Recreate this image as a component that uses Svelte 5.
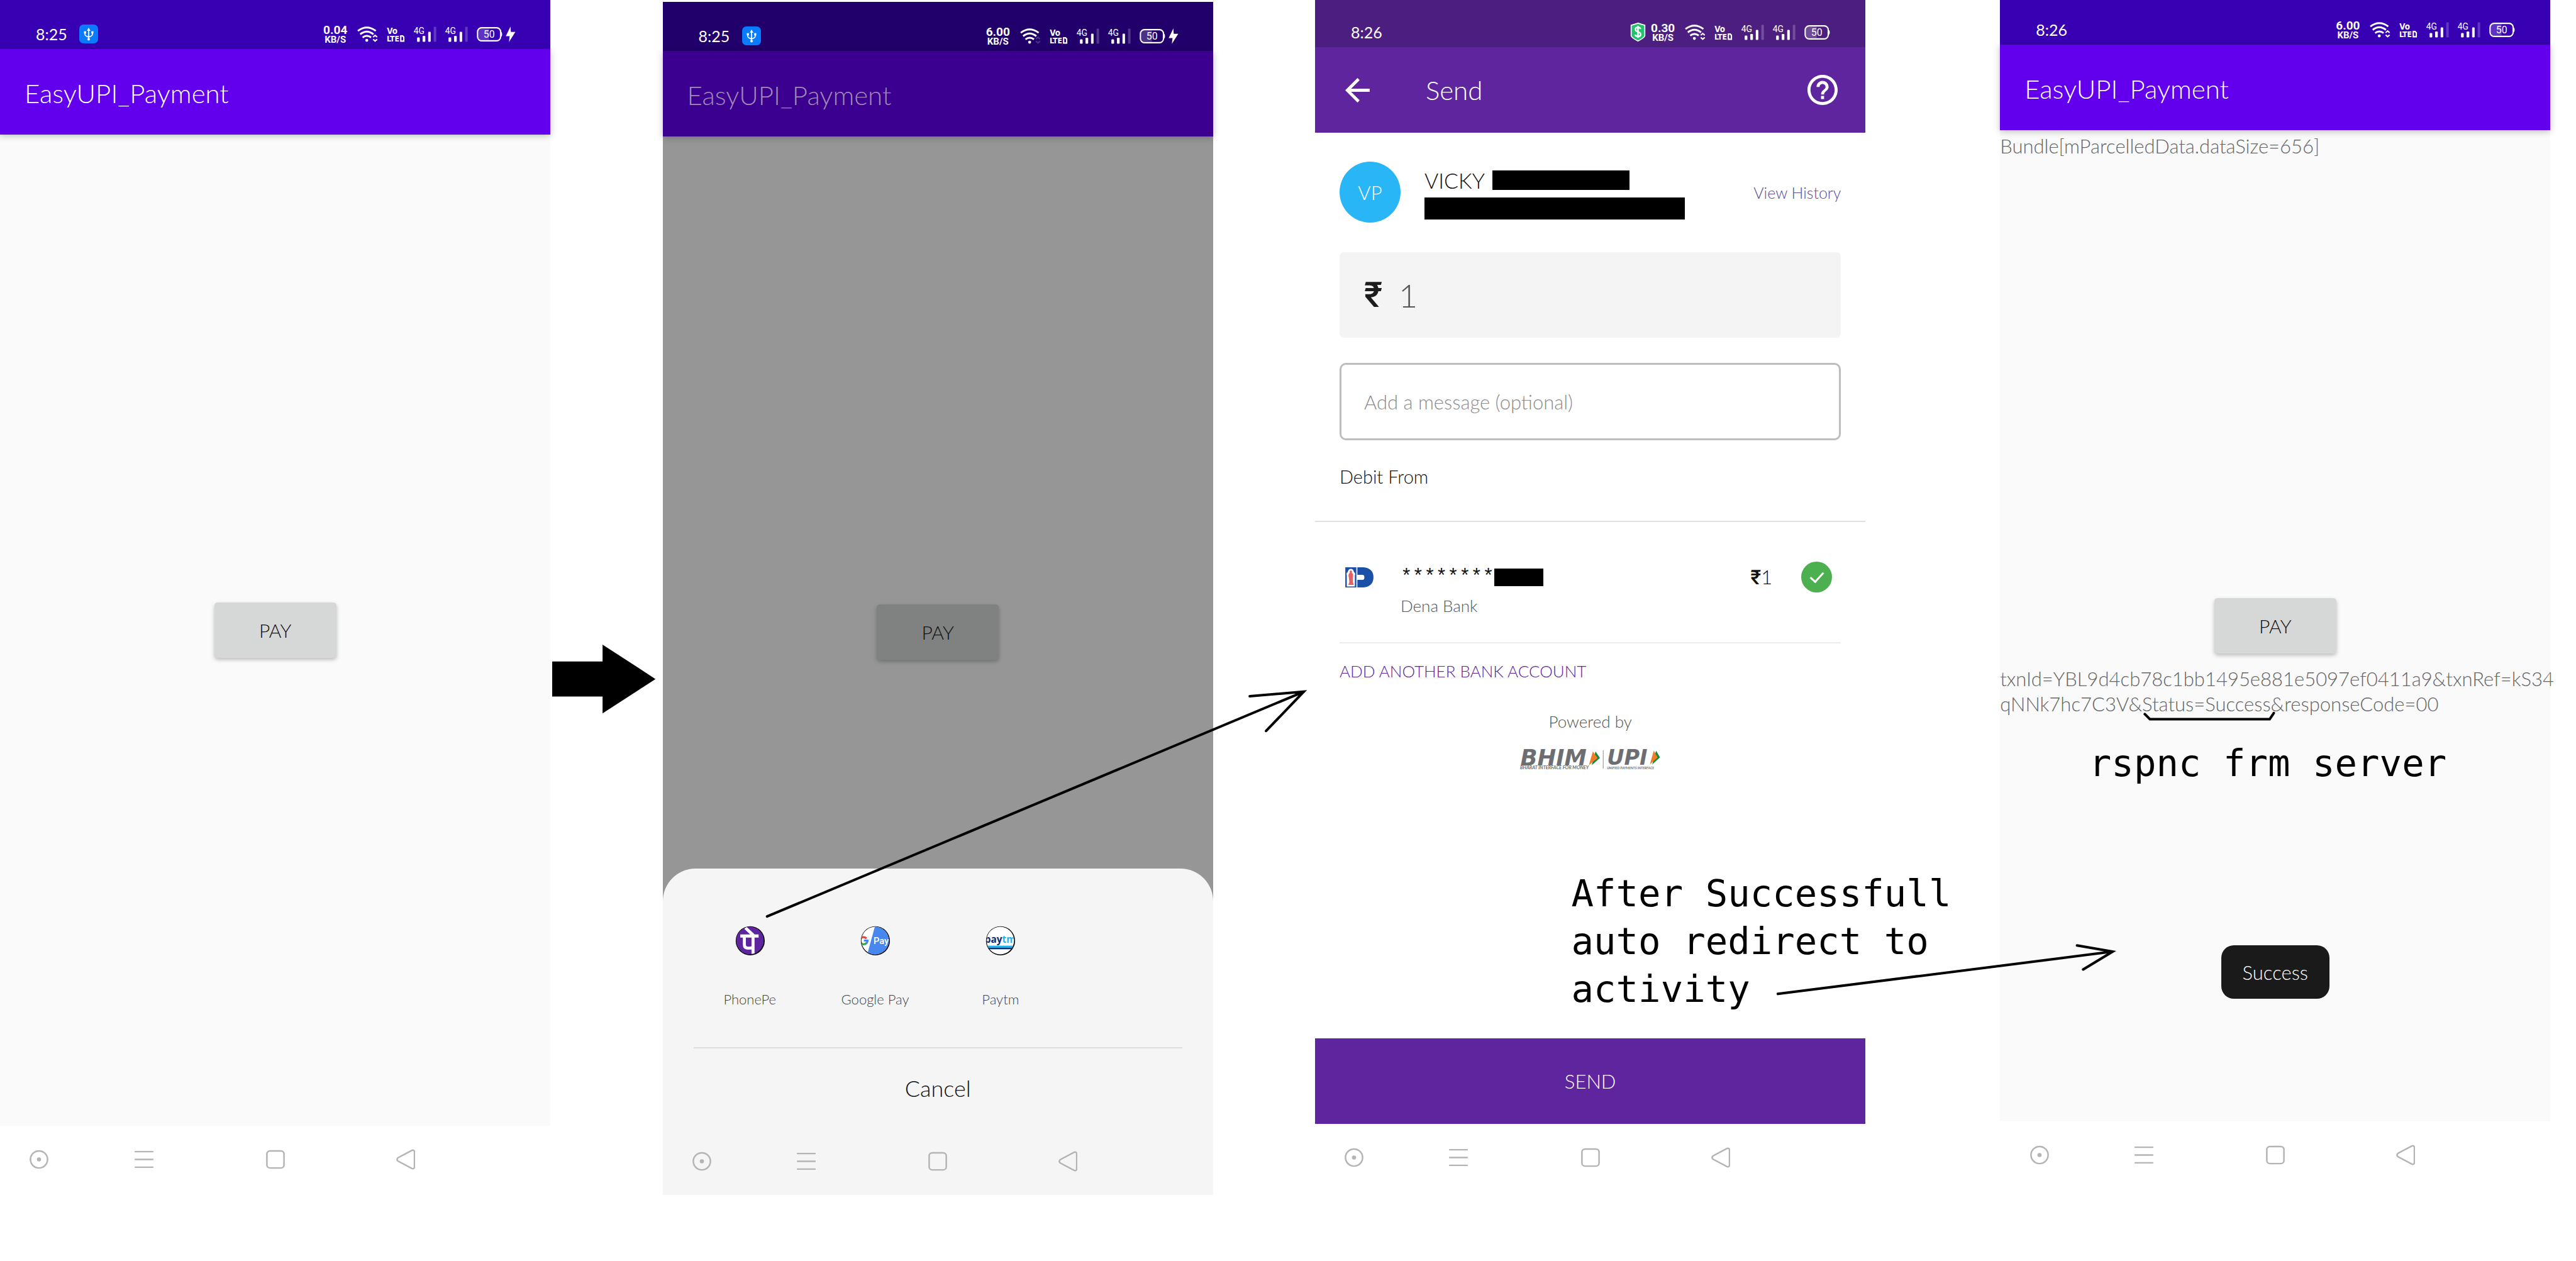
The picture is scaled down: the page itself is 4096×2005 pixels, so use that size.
<script>
  const apps = [
    { id: 'phonepe', name: 'PhonePe' },
    { id: 'gpay', name: 'Google Pay' },
    { id: 'paytm', name: 'Paytm' }
  ];
  let amount = $state('1');
  let message = $state('');
</script>

{#snippet signal()}
  <svg class="i-signal" viewBox="568 58 142 100" aria-hidden="true">
    <text x="571" y="107" font-size="52">4G</text>
    <rect x="591" y="127" width="16" height="26" rx="5" />
    <rect x="624" y="117" width="16" height="36" rx="5" />
    <rect x="657" y="93" width="15" height="60" rx="5" />
    <rect x="690" y="63" width="15" height="90" rx="5" opacity="0.22" />
  </svg>
{/snippet}

{#snippet status(time, rate, usb, shield, busy)}
  <div class="status">
    <span class="clock">{time}</span>
    {#if usb}
      <svg class="i-usb" viewBox="0 0 36 36" aria-hidden="true">
        <rect width="36" height="36" rx="8" fill="#0a7bff" />
        <g fill="none" stroke="#fff" stroke-width="2">
          <path d="M18 10v17M11 16v3q0 3 7 5M25 16v3q0 3-7 5" />
        </g>
        <path d="M18 6l3.500 6h-7zM9 13h4v4H9zM23 13h4v4h-4z" fill="#fff" />
        <circle cx="18" cy="28" r="2.500" fill="#fff" />
      </svg>
    {/if}
    <div class="tray">
      {#if shield}
        <svg class="i-shield" viewBox="0 0 30 36" aria-hidden="true">
          <path d="M15 1L28 5V25Q27 29 15 35 3 29 2 25V5Z" fill="#23c16b" stroke="#fff" stroke-width="2" />
          <path d="M20 12q-1-3-5-3-5 0-5 4 0 3 5 4.500 5 1.500 5 5 0 4-5 4-4.500 0-5.500-3.500M15 6v23" fill="none" stroke="#fff" stroke-width="3" />
        </svg>
      {/if}
      <span class="rate"><b>{rate}</b><b class="unit">KB/S</b></span>
      <svg class="i-wifi" viewBox="247 61 122 94" aria-hidden="true">
        <g fill="none" stroke="#fff" stroke-width="11">
          <path d="M250 88Q303 48 357 88" />
          <path d="M264 108Q303 76 343 108" />
          <path d="M278 127Q303 108 329 127" />
        </g>
        <g fill="none" stroke="#fff" stroke-width="8" opacity={busy ? 1 : 0.2}>
          <path d="M341 125l12-11 12 11M341 138l12 11 12-11" />
        </g>
        <circle cx="303" cy="144" r="9" />
      </svg>
      <svg class="i-volte" viewBox="408 46 120 124" aria-hidden="true">
        <text x="416" y="106" font-size="50">Vo</text>
        <text x="415" y="153" font-size="46">LTE</text>
        <path d="M499 118h11l7 7v24h-18z" fill="none" stroke="#fff" stroke-width="8" />
      </svg>
      {@render signal()}
      {@render signal()}
      <svg class="i-battery" viewBox="942 58 162 100" aria-hidden="true">
        <path d="M974 74H1020V142H974Q956 142 956 124V92Q956 74 974 74Z" opacity="0.2" />
        <rect x="951" y="69" width="138" height="78" rx="24" fill="none" stroke="#fff" stroke-width="8" />
        <path d="M1090 92q8 2 8 16t-8 16z" />
        <text x="1020" y="130" font-size="60" text-anchor="middle">50</text>
      </svg>
      {#if usb}
        <svg class="i-bolt" viewBox="1114 62 60 92" aria-hidden="true">
          <path d="M1143 62L1115 119H1138L1134 154 1172 94H1145Z" />
        </svg>
      {/if}
    </div>
  </div>
{/snippet}

{#snippet nav()}
  <nav class="nav" aria-label="System">
    <button aria-label="Assistive ball">
      <svg viewBox="0 0 36 40"><circle cx="18" cy="20" r="16.500" /><circle cx="18" cy="20" r="4" class="solid" /></svg>
    </button>
    <button aria-label="Recents">
      <svg viewBox="0 0 36 40"><path d="M0 5h36M0 20h36M0 35h36" /></svg>
    </button>
    <button aria-label="Home">
      <svg viewBox="0 0 36 40"><rect x="1.500" y="3.500" width="33" height="33" rx="6" /></svg>
    </button>
    <button aria-label="Back">
      <svg viewBox="0 0 36 40"><path d="M30 2.500L3 17Q0 20 3 23L30 37.500Q35 39 35 34V6Q35 1 30 2.500Z" /></svg>
    </button>
  </nav>
{/snippet}

<main class="board">
  <section class="phone first">
    {@render status('8:25', '0.04', true, false, true)}
    <header class="bar"><h1>EasyUPI_Payment</h1></header>
    <div class="stage"><button class="pay">PAY</button></div>
    {@render nav()}
  </section>

  <div class="gap">
    <svg class="block-arrow" viewBox="0 0 203 135" aria-hidden="true">
      <path d="M0 33H99V0L203 67.500 99 135V102H0Z" />
    </svg>
  </div>

  <section class="phone second">
    {@render status('8:25', '6.00', true, false, false)}
    <header class="bar"><h1>EasyUPI_Payment</h1></header>
    <div class="stage"><button class="pay">PAY</button></div>
    {@render nav()}
    <div class="sheet" role="dialog" aria-label="Choose an app">
      <div class="apps">
        {#each apps as app (app.id)}
          <button class="app">
            <svg viewBox="0 0 58 58" aria-hidden="true">
              <defs><clipPath id="clip-{app.id}"><circle cx="29" cy="29" r="27" /></clipPath></defs>
              <circle cx="29.500" cy="29.500" r="28.500" fill="#000" />
              <g clip-path="url(#clip-{app.id})">
                {#if app.id === 'phonepe'}
                  <rect width="58" height="58" fill="#5f259f" />
                  <path d="M10 20H46M18 20V37Q18 44 26 44 32 44 35 42M35 18V55M20 4L36 19" fill="none" stroke="#fff" stroke-width="6" />
                {:else if app.id === 'gpay'}
                  <rect width="58" height="58" fill="#fff" />
                  <path d="M29 0H58V58H13Z" fill="#4687f0" />
                  <path d="M12 25A8 8 0 0 0 1 24" fill="none" stroke="#ea4335" stroke-width="4" />
                  <path d="M1 34A8 8 0 0 0 12 34" fill="none" stroke="#34a853" stroke-width="4" />
                  <path d="M7 29H14Q14 33 11 35" fill="none" stroke="#4285f4" stroke-width="4" />
                  <text x="26" y="36" font-size="18" fill="#fff" class="g">Pay</text>
                {:else}
                  <rect width="58" height="58" fill="#fff" />
                  <text x="29" y="33" font-size="19" text-anchor="middle" class="p"><tspan fill="#0b2a70">pay</tspan><tspan fill="#1bb6ee">tm</tspan></text>
                  <rect y="39" width="58" height="4" fill="#1bb6ee" />
                  <rect y="43" width="58" height="3" fill="#0b2a70" />
                {/if}
              </g>
            </svg>
            <span>{app.name}</span>
          </button>
        {/each}
      </div>
      <hr />
      <button class="cancel">Cancel</button>
      {@render nav()}
    </div>
  </section>

  <section class="phone third">
    {@render status('8:26', '0.30', false, true, true)}
    <header class="bar">
      <button class="icon back" aria-label="Back">
        <svg viewBox="4 4 16 16"><path d="M20 11H7.830l5.590-5.590L12 4l-8 8 8 8 1.410-1.410L7.830 13H20v-2z" /></svg>
      </button>
      <h1>Send</h1>
      <button class="icon help" aria-label="Help">
        <svg viewBox="2 2 20 20"><path d="M11 18h2v-2h-2v2zm1-16C6.480 2 2 6.480 2 12s4.480 10 10 10 10-4.480 10-10S17.520 2 12 2zm0 18c-4.410 0-8-3.590-8-8s3.590-8 8-8 8 3.590 8 8-3.590 8-8 8zm0-14c-2.210 0-4 1.790-4 4h2c0-1.100.9-2 2-2s2 .9 2 2c0 2-3 1.750-3 5h2c0-2.250 3-2.500 3-5 0-2.210-1.790-4-4-4z" /></svg>
      </button>
    </header>
    <div class="form">
      <div class="payee">
        <span class="avatar">VP</span>
        <div class="who">
          <div class="name">VICKY <i class="mask m1"></i></div>
          <i class="mask m2"></i>
        </div>
        <a href="#history">View History</a>
      </div>
      <label class="amount"><span>₹</span><input aria-label="Amount" bind:value={amount} /></label>
      <input class="message" aria-label="Message" placeholder="Add a message (optional)" bind:value={message} />
      <h2>Debit From</h2>
    </div>
    <div class="accounts">
      <label class="account">
        <svg class="bank" viewBox="0 0 56 40" aria-hidden="true">
          <path d="M0 0H22V40H0ZM24 0H36Q56 2 56 20T36 40H24V25H34Q38 25 38 20T34 15H24Z" fill="#1c4fa8" />
          <path d="M3 38V16Q1 12 5 9 6 3 11 3T17 9Q21 12 19 16V38Z" fill="#fff" />
          <path d="M11 6q3 1 2 5 4 3 2 9v9l2 6H6l2-6-1-9q-2-6 2-9-1-4 2-5z" fill="#e0393e" opacity="0.8" />
        </svg>
        <span class="number"><span>********</span><i class="mask m3"></i></span>
        <span class="due"><b>₹</b>1</span>
        <input type="radio" name="account" checked aria-label="Pay from Dena Bank" />
        <span class="bank-name">Dena Bank</span>
      </label>
      <a class="add" href="#add">ADD ANOTHER BANK ACCOUNT</a>
      <p>Powered by</p>
      <svg class="bhim" viewBox="60 54 840 120" role="img" aria-label="BHIM UPI">
        <g fill="#6d6e71">
          <text x="64" y="146" font-size="133" class="logo">BHIM</text>
          <text x="580" y="143" font-size="126" class="logo">UPI</text>
          <text x="62" y="171" font-size="28" class="tag">BHARAT INTERFACE FOR MONEY</text>
          <text x="580" y="171" font-size="20" class="tag">UNIFIED PAYMENTS INTERFACE</text>
          <rect x="556" y="57" width="3" height="110" />
        </g>
        <path d="M512 64L538 104 489 147Z" fill="#128a43" />
        <path d="M496 64L524 104 472 147Z" fill="#f07d25" />
        <path d="M873 60L896 100 850 142Z" fill="#128a43" />
        <path d="M859 60L882 100 836 142Z" fill="#f07d25" />
      </svg>
    </div>
    <button class="send">SEND</button>
    {@render nav()}
  </section>

  <section class="phone fourth">
    {@render status('8:26', '6.00', false, false, true)}
    <header class="bar"><h1>EasyUPI_Payment</h1></header>
    <div class="stage result">
      <p>Bundle[mParcelledData.dataSize=656]</p>
      <button class="pay">PAY</button>
      <div class="after">
        <p>txnId=YBL9d4cb78c1bb1495e881e5097ef0411a9&amp;txnRef=kS34<br />qNNk7hc7C3V&amp;Status=Success&amp;responseCode=00</p>
        <div class="toast" role="status">Success</div>
      </div>
    </div>
    {@render nav()}
  </section>

  <svg class="lines" viewBox="0 0 5054 2474" aria-hidden="true">
    <path d="M1505 1798L2558 1357M2452 1366L2558 1357 2484 1434" />
    <path d="M3488 1950L4145 1867M4075 1855L4145 1867 4087 1902" />
    <path d="M4208 1401L4218 1411H4453L4461 1399" />
  </svg>
  <p class="note redirect">After Successfull<br />auto redirect to<br />activity</p>
  <p class="note server">rspnc frm server</p>
</main>

<style>
  :global(body) { background: #fff; }
  .board {
    position: relative;
    display: grid;
    grid-template-columns: 1080fr 220fr 1080fr 200fr 1080fr 264fr 1080fr 50fr;
    align-items: start;
    min-height: 100vh;
    overflow: hidden;
    font-family: Lato, 'Open Sans', sans-serif;
    font-weight: 300;
    color: #111;
  }
  h1, h2, p { margin: 0; font-weight: inherit; }
  button, input { font: inherit; color: inherit; border: 0; padding: 0; background: none; }
  a { text-decoration: none; }
  svg { display: block; }

  .phone { position: relative; display: flex; flex-direction: column; min-width: 0; }
  .first { grid-column: 1; --status: #3700b3; --bar: #6200ee; --page: #fafafa; --top: 78px; }
  .second { grid-column: 3; margin-top: 3px; --status: #21006b; --bar: #3b008f; --page: #969696; --top: 78px; }
  .third { grid-column: 5; --status: #4c1e7f; --bar: #5f259f; --page: #fff; --top: 75px; }
  .fourth { grid-column: 7; --status: #3700b3; --bar: #6200ee; --page: #fafafa; --top: 71px; }

  .status {
    box-sizing: border-box;
    height: var(--top);
    display: flex;
    align-items: flex-end;
    padding: 0 55px 8px 57px;
    background: var(--status);
    color: #fff;
  }
  .clock { font-size: 25px; line-height: 32px; font-weight: 400; min-width: 69px; }
  .status svg { fill: #fff; flex: none; overflow: visible; }
  .i-usb { width: 30px; height: 30px; margin-bottom: 1px; }
  .tray { display: flex; align-items: center; height: 32px; margin-left: auto; gap: 12px; }
  .rate {
    display: flex;
    flex-direction: column;
    align-items: center;
    font-family: Roboto, sans-serif;
    font-size: 19px;
    line-height: 17px;
  }
  .rate b { font-weight: 700; }
  .unit { font-size: 15px; line-height: 14px; }
  .i-shield { width: 25px; height: 30px; margin-right: -4px; }
  .i-wifi { width: 33px; height: 25px; margin-left: 4px; }
  .i-volte { width: 32px; height: 33px; }
  .i-volte text { font-family: 'Liberation Sans Narrow', 'DejaVu Sans Condensed', sans-serif; font-weight: 700; }
  .i-signal { width: 38px; height: 27px; }
  .i-signal text { font-family: Roboto, sans-serif; font-weight: 400; }
  .i-battery { width: 43px; height: 27px; }
  .i-battery text { font-family: Roboto, sans-serif; font-weight: 400; }
  .i-bolt { width: 16px; height: 25px; margin-left: -8px; }

  .bar {
    position: relative;
    box-sizing: border-box;
    height: 136px;
    display: flex;
    align-items: center;
    padding: 0 44px 0 39px;
    background: var(--bar);
    color: #fff;
    box-shadow: 0 2px 10px rgba(0, 0, 0, 0.25);
  }
  .bar h1 { font-size: 42px; line-height: 56px; padding-top: 3px; }
  .second .bar { color: #a08ab5; }

  .stage {
    min-height: 1576px;
    display: grid;
    place-items: center;
    background: var(--page);
  }
  .pay {
    width: 194px;
    height: 88px;
    border-radius: 5px;
    background: #d6d8d7;
    color: #111;
    font-size: 30px;
    box-shadow: 0 3px 6px rgba(0, 0, 0, 0.25);
  }
  .second .pay { background: #808281; }

  .nav {
    display: grid;
    grid-template-columns: 154fr 256fr 260fr 251fr 159fr;
    place-items: center;
    height: 107px;
  }
  .nav svg { width: 30px; height: 33px; fill: none; stroke: #b4b4b4; stroke-width: 3; }
  .nav .solid { fill: #b4b4b4; stroke: none; }

  .gap { grid-column: 2; padding: 1025px 11px 0 3px; }
  .block-arrow { width: 100%; }

  .sheet {
    position: absolute;
    left: 0;
    right: 0;
    bottom: 0;
    border-radius: 52px 52px 0 0;
    background: #f5f5f5;
  }
  .apps {
    display: grid;
    grid-template-columns: repeat(4, 1fr);
    padding: 91px 39px 62px 39px;
  }
  .app { display: flex; flex-direction: column; align-items: center; gap: 56px; }
  .app > svg { width: 47px; height: 47px; }
  .app span { font-size: 22px; line-height: 28px; color: #444; }
  .app .g { font-family: Roboto, sans-serif; font-weight: 500; }
  .app .p { font-family: 'Liberation Sans Narrow', 'Open Sans', sans-serif; font-weight: 700; }
  hr { margin: 0 49px; border: 0; height: 2px; background: #dcdcdc; }
  .cancel { display: block; width: 100%; height: 126px; font-size: 36px; }

  .third .bar { box-shadow: none; padding-left: 48px; }
  .icon svg { fill: #fff; }
  .back svg { width: 39px; height: 39px; }
  .third h1 { padding-left: 89px; padding-top: 0; }
  .help { margin-left: auto; }
  .help svg { width: 48px; height: 48px; }

  .form { padding: 46px 39px 50px; display: flex; flex-direction: column; border-bottom: 2px solid #e0e0e0; }
  .payee { display: flex; align-items: center; }
  .avatar {
    display: grid;
    place-items: center;
    width: 97px;
    height: 97px;
    margin-right: 38px;
    border-radius: 50%;
    background: #29b6f6;
    color: #fff;
    font-size: 31px;
  }
  .who { display: grid; gap: 12px; align-self: flex-end; padding-bottom: 5px; }
  .name { display: flex; gap: 12px; font-size: 34px; line-height: 31px; }
  .mask { display: block; background: #000; }
  .m1 { width: 218px; height: 31px; }
  .m2 { width: 414px; height: 35px; }
  .payee a { margin-left: auto; font-size: 25px; color: #5e4b9b; }
  .amount {
    display: flex;
    align-items: center;
    height: 136px;
    margin-top: 47px;
    border-radius: 7px;
    background: #f4f4f4;
    padding: 0 39px;
  }
  .amount span { width: 55px; font: 500 56px/64px Roboto, sans-serif; color: #1d1d1d; }
  .amount input { flex: 1; min-width: 0; font-size: 52px; color: #555; }
  .message {
    box-sizing: border-box;
    height: 123px;
    margin: 40px 0 38px;
    padding: 0 36px;
    border: 3px solid #bdbdbd;
    border-radius: 10px;
    font-size: 31px;
  }
  .message::placeholder { color: #8c8c8c; opacity: 1; }
  h2 { font-size: 29px; line-height: 40px; }

  .accounts { padding: 0 39px; display: flex; flex-direction: column; min-height: 821px; }
  .account {
    display: grid;
    grid-template-columns: 97px 1fr auto auto;
    align-items: center;
    padding: 63px 14px 42px 0;
    row-gap: 5px;
    border-bottom: 2px solid #ececec;
  }
  .bank { width: 45px; height: 32px; margin-left: 9px; }
  .number { display: flex; align-items: center; font: 300 31px/32px 'Liberation Mono', monospace; }
  .m3 { width: 78px; height: 28px; }
  .due { font-size: 31px; margin-right: 46px; }
  .due b { font: 500 32px/40px Roboto, sans-serif; }
  .account input {
    appearance: none;
    display: grid;
    place-items: center;
    width: 49px;
    height: 49px;
    margin: 0;
    border-radius: 50%;
    background: #4caf50;
  }
  .account input::after {
    content: '';
    width: 9px;
    height: 18px;
    margin-bottom: 5px;
    border: solid #fff;
    border-width: 0 3px 3px 0;
    rotate: 42deg;
  }
  .bank-name { grid-column: 2; font-size: 26px; line-height: 32px; color: #555; }
  .add { margin-top: 28px; font-size: 26px; line-height: 32px; color: #5f259f; }
  .accounts p { margin: 48px 0 29px; text-align: center; font-size: 26px; line-height: 32px; color: #555; }
  .bhim { width: 227px; height: 32px; align-self: center; overflow: visible; }
  .logo { font-family: 'DejaVu Sans', sans-serif; font-weight: 700; font-style: oblique; }
  .tag { font-family: Lato, sans-serif; font-weight: 700; font-style: italic; }
  .send { height: 136px; background: #5f259f; color: #fff; font-size: 31px; }

  .result { grid-template-rows: 1fr auto 1fr; }
  .result p { place-self: start; font-size: 31px; line-height: 40px; white-space: nowrap; color: #666; padding-top: 5px; }
  .after { align-self: stretch; justify-self: stretch; display: flex; flex-direction: column; align-items: center; min-width: 0; }
  .result .after p { align-self: flex-start; padding-top: 20px; }
  .toast {
    margin: auto 0 195px;
    padding: 22px 34px 21px;
    border-radius: 20px;
    background: #1a1a1a;
    color: #fff;
    font-size: 31px;
    line-height: 42px;
  }

  .lines { position: absolute; left: 0; top: 0; width: 100%; fill: none; stroke: #000; stroke-width: 5; stroke-linecap: round; }
  .note { position: absolute; font: 400 59px/76px 'DejaVu Sans Mono', monospace; color: #000; white-space: nowrap; }
  .redirect { left: 61%; top: 1383px; }
  .server { left: 81.1%; top: 1176px; }
</style>
